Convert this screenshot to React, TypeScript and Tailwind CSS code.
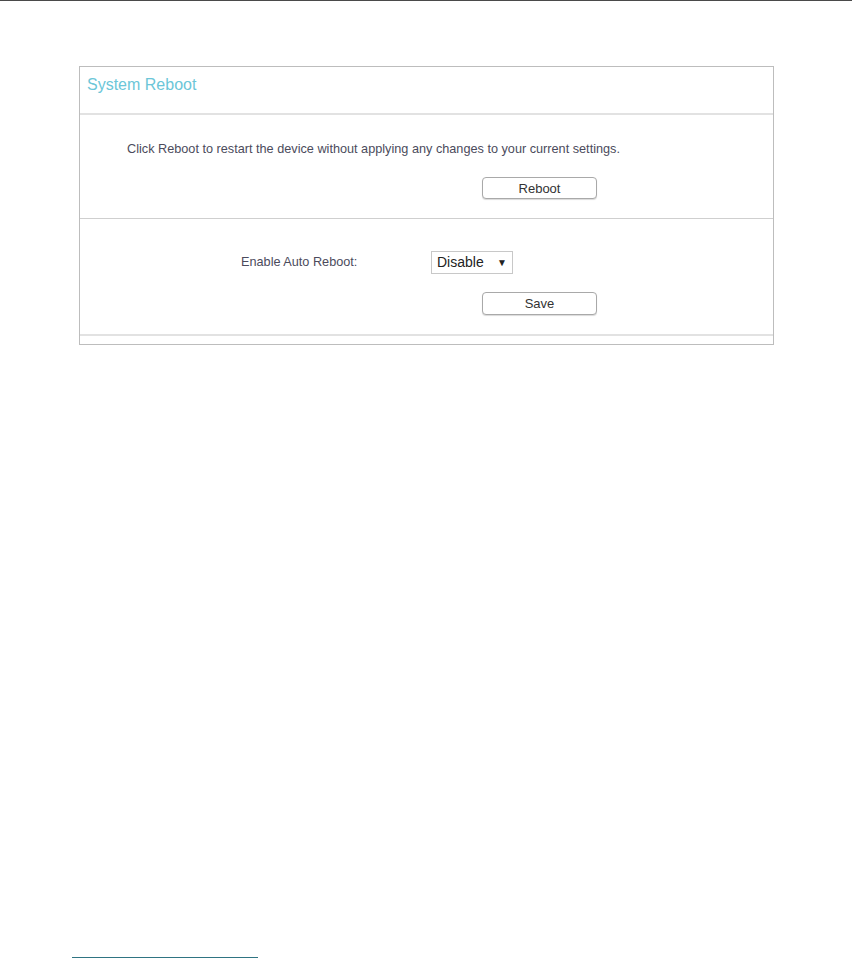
export default function App() {
    return (
        <div className="w-[852px] h-[958px] bg-white border-t border-[#4a4a4a] relative font-['Liberation_Sans',Arial,sans-serif]">
            <div className="ml-[79px] mt-[65px] w-[695px] border border-[#bdbdbd]">
                {/* Header */}
                <div className="h-[48px] pt-[10px] px-[7px] border-b-2 border-[#e2e2e2]">
                    <h1 className="text-[16px] text-[#6cc6d8] leading-[16px]">System Reboot</h1>
                </div>

                {/* Manual reboot */}
                <div className="h-[104px] border-b border-[#cfcfcf] pt-[27px]">
                    <p className="ml-[47px] text-[12.7px] text-[#4b4b5c] leading-[14px]">
                        Click Reboot to restart the device without applying any changes to your current settings.
                    </p>
                    <button className="ml-[402px] mt-[21px] w-[115px] h-[22px] rounded-[4px] border border-[#a9a9a9] bg-white text-[13px] text-[#333] leading-none shadow-[0_1px_1px_rgba(0,0,0,0.15)]">
                        Reboot
                    </button>
                </div>

                {/* Auto reboot */}
                <div className="h-[117px] border-b-2 border-[#e2e2e2] pt-[32px]">
                    <div className="flex items-center">
                        <span className="ml-[161px] w-[190px] text-[12.7px] text-[#4b4b5c]">Enable Auto Reboot:</span>
                        <div className="w-[82px] h-[23px] border border-[#c8c8c8] flex items-center justify-between px-[5px] text-[14px] text-[#222]">
                            <span>Disable</span>
                            <span className="text-[10px]">▼</span>
                        </div>
                    </div>
                    <button className="ml-[402px] mt-[18px] w-[115px] h-[23px] rounded-[4px] border border-[#a9a9a9] bg-white text-[13px] text-[#333] leading-none shadow-[0_1px_1px_rgba(0,0,0,0.15)]">
                        Save
                    </button>
                </div>
                <div className="h-[8px]" />
            </div>

            {/* footnote rule */}
            <div className="absolute left-[72px] bottom-0 w-[186px] h-[1px] bg-[#2f7482]" />
        </div>
    );
}
